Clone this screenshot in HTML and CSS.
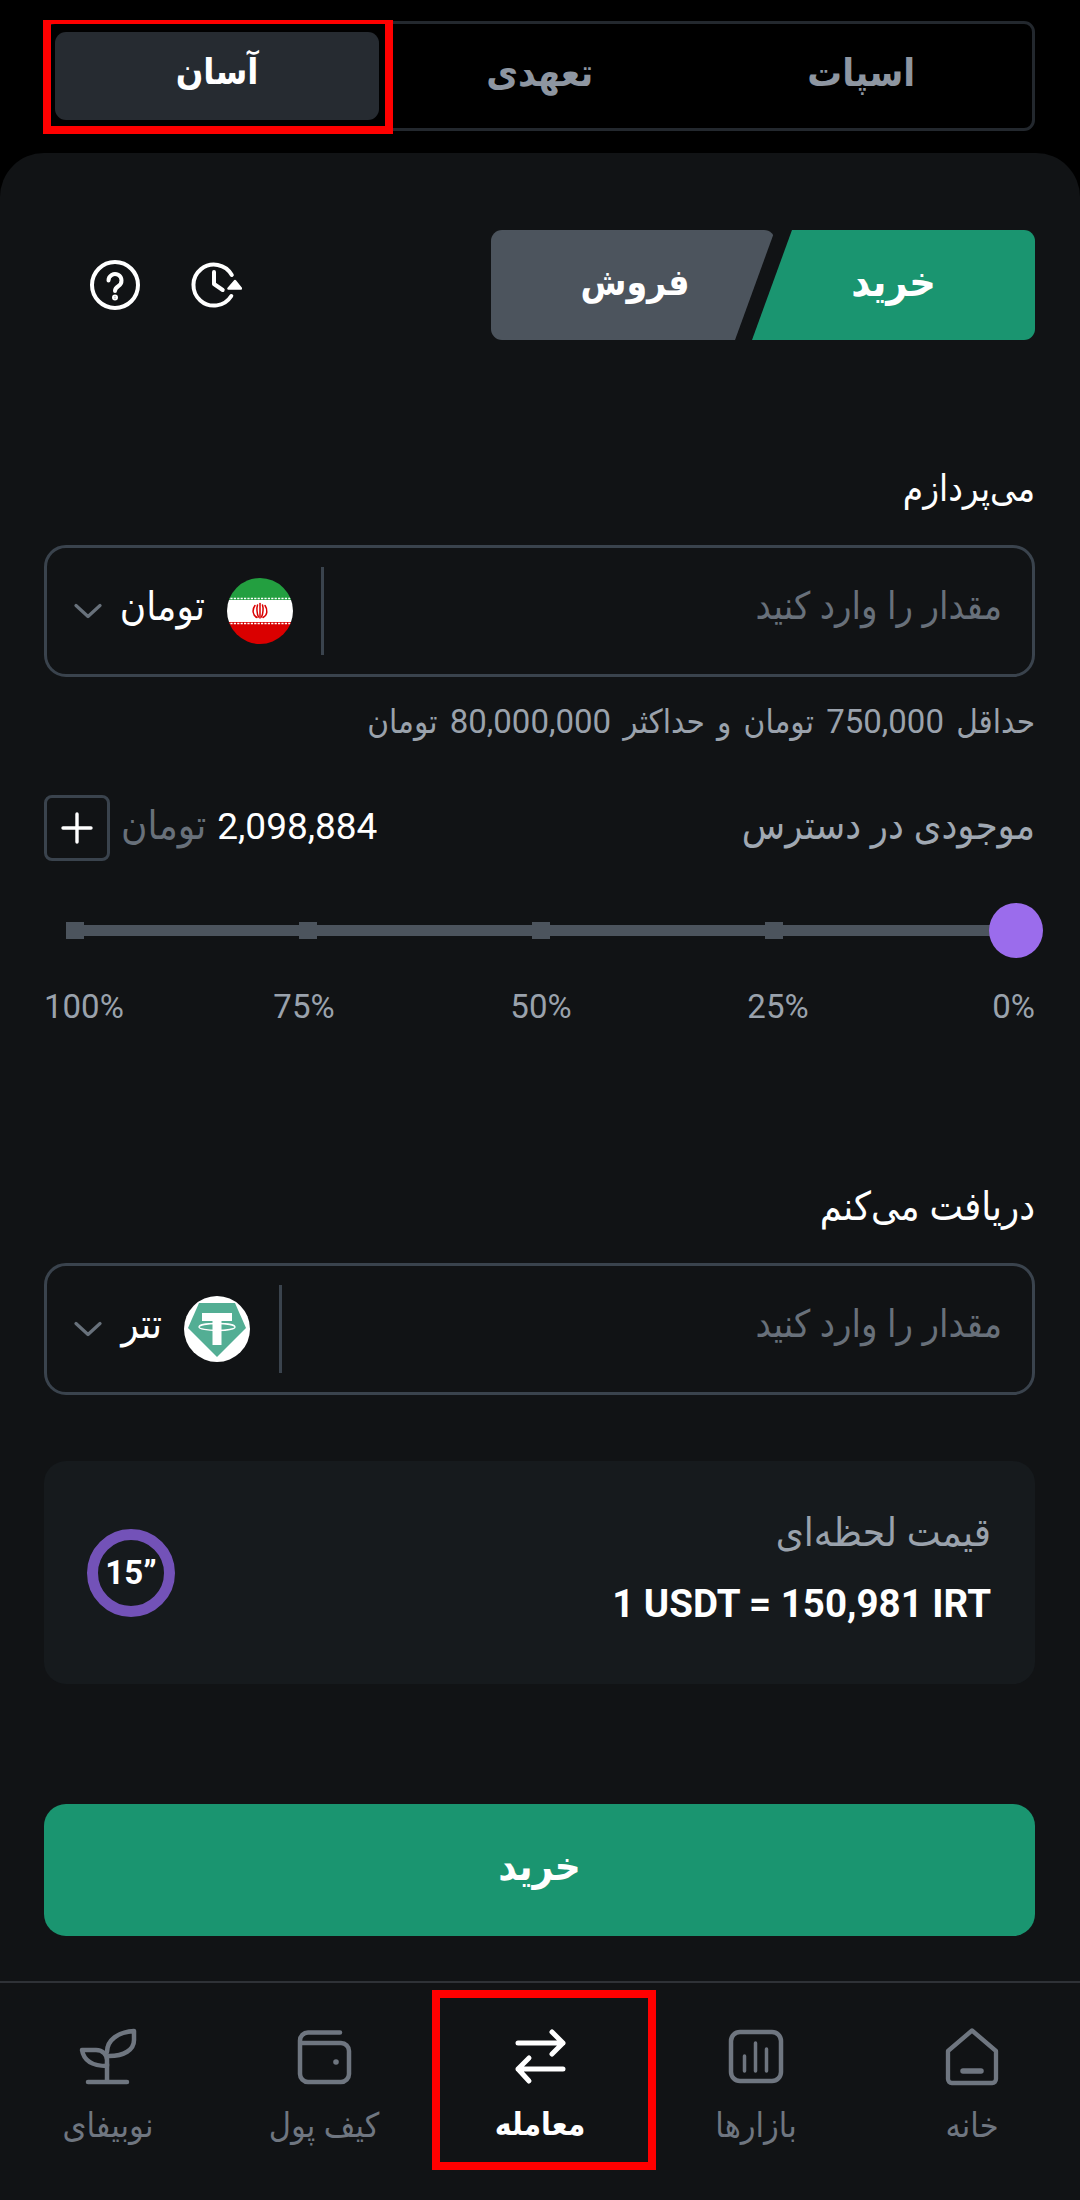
FILE: index.html
```html
<!DOCTYPE html>
<html lang="fa" dir="rtl">
<head>
<meta charset="utf-8">
<title>معامله آسان</title>
<link rel="stylesheet" href="styles.css">
</head>
<body>
<div class="page">
  <nav class="tabs">
    <div class="tab">اسپات</div>
    <div class="tab">تعهدی</div>
    <div class="tab tab-active">آسان</div>
    <span class="mark mark-tab"></span>
  </nav>
  <main class="card">
    <div class="head">
      <div class="side">
        <div class="side-buy">خرید</div>
        <div class="side-sell">فروش</div>
      </div>
      <div class="head-icons">
        <svg class="ic48" viewBox="0 0 52 52" fill="none" stroke="#fff" stroke-width="4" stroke-linecap="round" stroke-linejoin="round"><path d="M41.800 16A20.500 20.500 0 1 0 41.300 37"/><path d="M24 13V25L32.700 31"/><path d="M45 22L38.500 29.500H51Z" fill="#fff" stroke-width="2.500"/></svg>
        <svg class="ic48" viewBox="0 0 52 52" fill="none" stroke="#fff" stroke-width="4" stroke-linecap="round" stroke-linejoin="round"><circle cx="26" cy="26" r="23"/><path d="M19.500 21.500a6.500 6.500 0 1 1 10 5.500c-2 1.300-3.500 2.300-3.500 5"/><circle cx="26" cy="38.500" r="1" fill="#fff"/></svg>
      </div>
    </div>

    <div class="label label-pay">می‌پردازم</div>
    <div class="field">
      <div class="placeholder">مقدار را وارد کنید</div>
      <div class="select select-irt">
        <svg class="coin" viewBox="0 0 66 66"><defs><clipPath id="c1"><circle cx="33" cy="33" r="33"/></clipPath></defs><g clip-path="url(#c1)"><rect width="66" height="22" fill="#239f40"/><rect y="22" width="66" height="22" fill="#fff"/><rect y="44" width="66" height="22" fill="#da0000"/><path d="M0 20.500H66M0 45.500H66" stroke="#fff" stroke-width="1.600" stroke-dasharray="2.200 1.200"/></g><g fill="none" stroke="#da0000" stroke-width="1.500" stroke-linecap="round"><path d="M33 25.500V40"/><path d="M30.500 27c-1 3-.6 9 1 12"/><path d="M35.500 27c1 3 .6 9-1 12"/><path d="M28 27.500c-3 4-2.500 10 2 12"/><path d="M38 27.500c3 4 2.500 10-2 12"/></g></svg>
        <span class="select-name">تومان</span>
        <svg class="chev" viewBox="0 0 28 16" fill="none" stroke="#68717b" stroke-width="3.200" stroke-linecap="round" stroke-linejoin="round"><path d="M2 2.500L14 13.500L26 2.500"/></svg>
      </div>
    </div>
    <div class="hint">حداقل 750,000 تومان و حداکثر 80,000,000 تومان</div>

    <div class="balance">
      <span class="balance-label">موجودی در دسترس</span>
      <div class="balance-side">
        <span class="balance-num">2,098,884</span>
        <span class="balance-unit">تومان</span>
        <span class="plus"><svg class="plus-ic" viewBox="0 0 32 32" stroke="#fff" stroke-width="3.400" stroke-linecap="round"><path d="M16 2V30M2 16H30"/></svg></span>
      </div>
    </div>

    <div class="slider">
      <i class="tick"></i><i class="tick"></i><i class="tick"></i><i class="tick"></i><i class="thumb"></i>
    </div>
    <div class="pcts">
      <span>100%</span><span>75%</span><span>50%</span><span>25%</span><span>0%</span>
    </div>

    <div class="label label-get">دریافت می‌کنم</div>
    <div class="field">
      <div class="placeholder">مقدار را وارد کنید</div>
      <div class="select select-usdt">
        <svg class="coin" viewBox="0 0 66 66"><circle cx="33" cy="33" r="33" fill="#fff"/><path d="M15 7H51L62 32L33 61L4 32Z" fill="#53ae94"/><path d="M18 17H48V25H37.500V49H28.500V25H18Z" fill="#fff"/><ellipse cx="33" cy="31" rx="18" ry="3.500" fill="none" stroke="#fff" stroke-width="1.300"/></svg>
        <span class="select-name">تتر</span>
        <svg class="chev" viewBox="0 0 28 16" fill="none" stroke="#68717b" stroke-width="3.200" stroke-linecap="round" stroke-linejoin="round"><path d="M2 2.500L14 13.500L26 2.500"/></svg>
      </div>
    </div>

    <div class="price">
      <div class="price-text">
        <div class="price-label">قیمت لحظه‌ای</div>
        <div class="price-value" dir="ltr">1 USDT = 150,981 IRT</div>
      </div>
      <div class="ring" dir="ltr">15”</div>
    </div>

    <div class="submit">خرید</div>
  </main>
  <footer class="nav">
    <div class="nav-item">
      <svg class="nav-ic" viewBox="0 0 60 60" fill="none" stroke="#6f7680" stroke-width="4.500" stroke-linecap="round" stroke-linejoin="round"><path d="M30 2.500L55 23V51a4 4 0 0 1-4 4H9a4 4 0 0 1-4-4V23Z" transform="matrix(.96 0 0 1 1.200 0)"/><path d="M21 43H39" stroke-width="5.500"/></svg>
      <span>خانه</span>
    </div>
    <div class="nav-item">
      <svg class="nav-ic" viewBox="0 0 60 60" fill="none" stroke="#6f7680" stroke-width="4.500" stroke-linecap="round" stroke-linejoin="round"><rect x="5" y="4" width="50" height="49" rx="9"/><path d="M29.500 15V43M18.500 28V43M40.500 21V43" stroke-width="3.500"/></svg>
      <span>بازارها</span>
    </div>
    <div class="nav-item nav-active">
      <svg class="nav-ic" viewBox="0 0 60 60" fill="none" stroke="#fff" stroke-width="5" stroke-linecap="round" stroke-linejoin="round"><path d="M8 15H53M42 4L53 15L42 26"/><path d="M53 41H8M19 30L8 41L19 53"/></svg>
      <span>معامله</span>
      <span class="mark mark-nav"></span>
    </div>
    <div class="nav-item">
      <svg class="nav-ic" viewBox="0 0 60 60" fill="none" stroke="#6f7680" stroke-width="4.500" stroke-linecap="round" stroke-linejoin="round"><path d="M46 4.500H14a8 8 0 0 0-8 8V46a8 8 0 0 0 8 8H47a8 8 0 0 0 8-8V23a8 8 0 0 0-8-8H6"/><circle cx="42" cy="34" r="2.800" fill="#6f7680" stroke="none"/></svg>
      <span>کیف پول</span>
    </div>
    <div class="nav-item">
      <svg class="nav-ic" viewBox="0 0 60 60" fill="none" stroke="#6f7680" stroke-width="4.500" stroke-linecap="round" stroke-linejoin="round"><path d="M29 54V36M10 54H49"/><path d="M4 22H18C25 22 29 27 29 32V38C16 38 6 34 4 22Z"/><path d="M29 24C29 12 40 4 56 3V12C56 22 46 28 31 28"/></svg>
      <span>نوبیفای</span>
    </div>
  </footer>
</div>
</body>
</html>
```
FILE: styles.css
```css
* { box-sizing: border-box; }
html, body { margin: 0; padding: 0; background: #000; }
body { width: 1080px; height: 2200px; font-family: Roboto, "DejaVu Sans Condensed", "DejaVu Sans", sans-serif; color: #fff; overflow: hidden; }
.page { display: flex; flex-direction: column; height: 2200px; }

.tabs { position: relative; display: flex; height: 110px; margin: 21px 45px 0 44px; padding: 8px 10px 8px 8px; border: 3px solid #23282e; border-radius: 11px; }
.tab { flex: 1; display: flex; align-items: center; justify-content: center; padding-bottom: 8px; font-size: 38.500px; font-weight: 700; color: #8e96a1; border-radius: 11px; }
.tab-active { background: #262b31; color: #fff; flex: none; width: 324px; font-size: 36px; }

.mark { position: absolute; border: 8px solid #f00; pointer-events: none; }
.mark-tab { left: -4px; top: -4px; width: 350px; height: 114px; border-top-width: 4px; }
.mark-nav { left: 0; top: 7px; width: 224px; height: 180px; }

.card { flex: 1; display: flex; flex-direction: column; margin-top: 22px; padding: 77px 45px 0 44px; background: #111315; border-radius: 44px 44px 0 0; }

.head { display: flex; justify-content: space-between; align-items: center; height: 110px; }
.side { display: flex; width: 544px; height: 110px; }
.side-buy { width: 283px; display: flex; align-items: center; justify-content: center; padding-bottom: 6px; background: #1a9570; font-size: 41px; font-weight: 700; clip-path: polygon(40px 0, 100% 0, 100% 100%, 0 100%); border-radius: 0 11px 11px 0; }
.side-sell { width: 284px; margin-right: -23px; display: flex; align-items: center; justify-content: center; padding: 0 0 6px 4px; background: #4c545d; font-size: 37px; font-weight: 700; clip-path: polygon(0 0, 100% 0, calc(100% - 40px) 100%, 0 100%); border-radius: 11px; }
.head-icons { display: flex; gap: 49px; padding-left: 45px; }
.ic48 { width: 52px; height: 52px; display: block; }

.label { line-height: 48px; color: #fff; }
.label-pay { margin-top: 125px; font-size: 36.500px; }
.label-get { margin-top: 156px; font-size: 39.500px; }

.field { display: flex; align-items: center; height: 132px; margin-top: 32px; border: 3px solid #3a434d; border-radius: 22px; }
.placeholder { flex: 1; padding: 0 30px 11px 0; font-size: 38px; color: #68707a; }
.select { display: flex; align-items: center; height: 88px; border-right: 3px solid #3a434d; padding-left: 27px; }
.select-irt { width: 277px; padding-right: 28px; }
.select-usdt { width: 235px; padding-right: 29px; }
.coin { width: 66px; height: 66px; display: block; flex: none; }
.select-name { flex: 1; margin-right: 22px; padding-bottom: 9px; font-size: 40px; color: #fff; }
.chev { width: 28px; height: 16px; flex: none; display: block; }

.hint { margin-top: 25px; font-size: 33px; line-height: 40px; word-spacing: 4px; color: #9aa2ac; }

.balance { display: flex; justify-content: space-between; align-items: center; height: 64px; margin-top: 54px; }
.balance-label { padding-bottom: 6px; font-size: 39.500px; color: #a0a8b2; }
.balance-side { display: flex; align-items: center; gap: 11px; }
.balance-num { padding-bottom: 3px; font-size: 37px; color: #fff; }
.balance-unit { padding-bottom: 6px; font-size: 40px; color: #68707a; }
.plus { width: 66px; height: 66px; display: flex; align-items: center; justify-content: center; border: 3px solid #3a434d; border-radius: 8px; }
.plus-ic { width: 32px; height: 32px; display: block; }

.slider { display: flex; align-items: center; gap: 215px; direction: ltr; height: 55px; margin: 43px -6px 0 22px; background: linear-gradient(#4c545d, #4c545d) no-repeat 0 50% / 95% 11px; }
.tick { width: 18px; height: 17px; background: #4c545d; flex: none; }
.thumb { width: 54px; height: 55px; border-radius: 50%; background: #9b6cec; flex: none; margin-left: -9px; }

.pcts { display: grid; grid-template-columns: 141.500px repeat(3, 237px) 1fr; direction: ltr; margin-top: 29px; font-size: 33px; line-height: 40px; color: #9aa2ac; }
.pcts span { text-align: center; }
.pcts span:first-child { text-align: left; }
.pcts span:last-child { text-align: right; }

.price { display: flex; align-items: center; justify-content: space-between; height: 223px; margin-top: 66px; padding: 0 44px 0 43px; background: #161a1d; border-radius: 22px; }
.price-text { display: flex; flex-direction: column; gap: 26px; padding-bottom: 10px; }
.price-label { font-size: 40px; line-height: 46px; color: #9aa2ac; }
.price-value { font-size: 38.500px; font-weight: 700; line-height: 44px; }
.ring { width: 88px; height: 88px; border: 11px solid #7352b8; border-radius: 50%; display: flex; align-items: center; justify-content: center; font-size: 33px; font-weight: 700; }

.submit { display: flex; align-items: center; justify-content: center; height: 132px; margin-top: 120px; padding-bottom: 8px; background: #1a9570; border-radius: 22px; font-size: 40px; font-weight: 700; }

.nav { flex: none; display: grid; grid-template-columns: repeat(5, 216px); height: 219px; background: #111315; border-top: 2px solid #2f3237; }
.nav-item { position: relative; display: flex; flex-direction: column; align-items: center; padding-top: 45px; font-size: 34px; color: #6f7680; }
.nav-item span:not(.mark) { margin-top: 15px; line-height: 44px; }
.nav-active { color: #fff; font-size: 31.500px; font-weight: 700; }
.nav-ic { width: 60px; height: 60px; display: block; }
```
